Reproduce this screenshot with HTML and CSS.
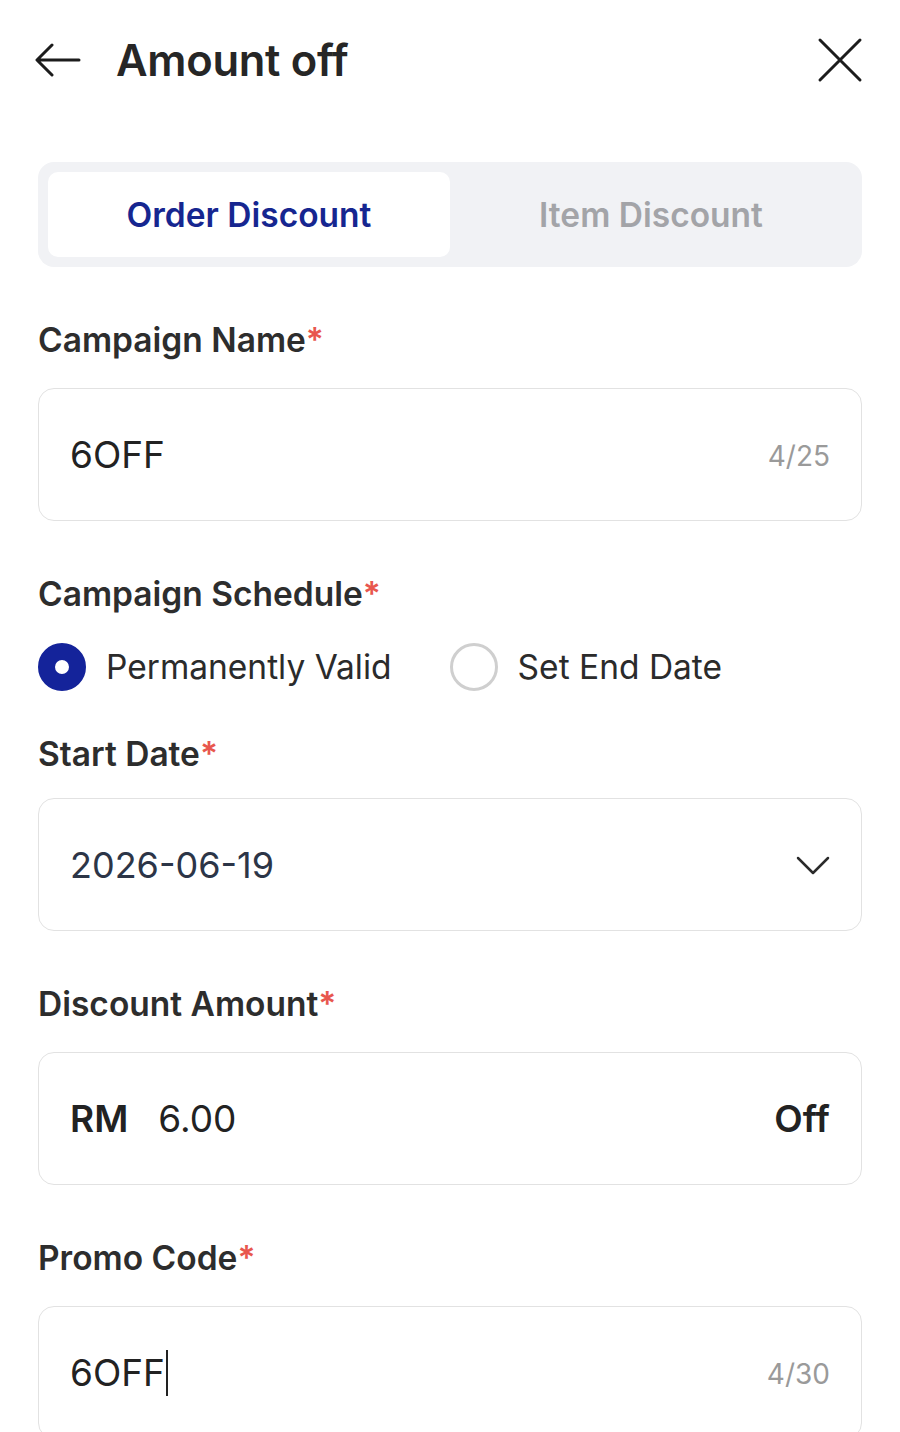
FILE: index.html
```html
<!DOCTYPE html>
<html>

<head>
  <title>Amount off</title>
  <link rel="stylesheet" href="styles.css">
</head>

<body>
  <div class="header">
    <button class="iconButton" aria-label="Back">
      <svg width="46" height="36" viewBox="0 0 46 36">
        <path d="M44 18H3M17 3L2 18l15 15" fill="none" stroke="#1c1c1c" stroke-width="3" stroke-linecap="round" stroke-linejoin="round" />
      </svg>
    </button>
    <h1 class="title">Amount off</h1>
    <button class="iconButton closeButton" aria-label="Close">
      <svg width="46" height="46" viewBox="0 0 46 46">
        <path d="M3 3l40 40M43 3L3 43" fill="none" stroke="#1c1c1c" stroke-width="3" stroke-linecap="round" />
      </svg>
    </button>
  </div>

  <div class="content">
    <div class="tabs">
      <div class="tab active">Order Discount</div>
      <div class="tab">Item Discount</div>
    </div>

    <div class="field">
      <div class="label">Campaign Name<span class="req">*</span></div>
      <div class="box">
        <span class="value">6OFF</span>
        <span class="counter">4/25</span>
      </div>
    </div>

    <div class="field">
      <div class="label">Campaign Schedule<span class="req">*</span></div>
      <div class="radios">
        <div class="radio">
          <span class="dot checked"></span>
          <span>Permanently Valid</span>
        </div>
        <div class="radio">
          <span class="dot"></span>
          <span>Set End Date</span>
        </div>
      </div>
    </div>

    <div class="field tight">
      <div class="label">Start Date<span class="req">*</span></div>
      <div class="box">
        <span class="value date">2026-06-19</span>
        <svg width="34" height="20" viewBox="0 0 34 20">
          <path d="M2 3l15 15L32 3" fill="none" stroke="#2b2b2b" stroke-width="2.5" stroke-linecap="round" stroke-linejoin="round" />
        </svg>
      </div>
    </div>

    <div class="field">
      <div class="label">Discount Amount<span class="req">*</span></div>
      <div class="box">
        <span class="value"><b class="unit">RM</b>6.00</span>
        <b class="unit">Off</b>
      </div>
    </div>

    <div class="field">
      <div class="label">Promo Code<span class="req">*</span></div>
      <div class="box">
        <span class="value">6OFF<span class="caret"></span></span>
        <span class="counter">4/30</span>
      </div>
    </div>
  </div>
</body>

</html>
```

FILE: styles.css
```css
body {
  margin: 0;
  background: #fff;
  color: #222;
  font-family: Inter, "Noto Sans", sans-serif;
}

.header {
  height: 120px;
  display: flex;
  align-items: center;
  padding: 0 37px 0 35px;
}

.iconButton {
  background: none;
  border: none;
  padding: 0;
  display: flex;
}

.title {
  margin: 0 0 0 35px;
  flex-grow: 1;
  font-size: 43.5px;
  font-weight: 600;
  color: #262626;
  letter-spacing: -0.3px;
}

.content {
  padding: 42px 38px 0 38px;
}

.tabs {
  display: flex;
  background: #f1f2f5;
  border-radius: 16px;
  padding: 10px;
  height: 85px;
}

.tab {
  flex: 1;
  display: flex;
  align-items: center;
  justify-content: center;
  font-size: 33.5px;
  font-weight: 600;
  color: #a3a4a8;
  border-radius: 10px;
}

.tab.active {
  background: #fff;
  color: #162690;
}

.field {
  margin-top: 53px;
}

.label {
  height: 40px;
  line-height: 40px;
  font-size: 33.5px;
  font-weight: 600;
  color: #2d2d2d;
  margin-bottom: 28px;
}

.field.tight {
  margin-top: 43px;
}

.field.tight .label {
  margin-bottom: 24px;
}

.req {
  color: #e8574e;
}

.box {
  height: 133px;
  box-sizing: border-box;
  border: 1.5px solid #e2e2e2;
  border-radius: 16px;
  display: flex;
  align-items: center;
  justify-content: space-between;
  padding: 0 31px;
}

.value {
  font-size: 37px;
  color: #222;
  display: flex;
  align-items: center;
}

.value.date {
  font-size: 36px;
  color: #2c3547;
}

.unit {
  font-size: 37px;
  font-weight: 600;
  color: #222;
  margin-right: 30px;
}

.box > .unit {
  margin-right: 0;
}

.counter {
  font-size: 28px;
  color: #9a9a9a;
  margin-top: 3px;
}

.caret {
  display: inline-block;
  width: 2px;
  height: 46px;
  background: #222;
  margin-left: 1px;
}

.radios {
  display: flex;
  gap: 58px;
  margin-top: 29px;
}

.radio {
  display: flex;
  align-items: center;
  gap: 20px;
  font-size: 33.5px;
  color: #2b2b2b;
}

.dot {
  width: 48px;
  height: 48px;
  box-sizing: border-box;
  border-radius: 50%;
  border: 3px solid #cfcfcf;
}

.dot.checked {
  border: 17px solid #14239a;
  background: #fff;
}
```
